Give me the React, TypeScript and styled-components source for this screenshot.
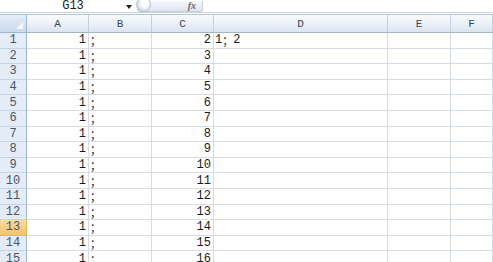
import React from 'react';
import styled, { createGlobalStyle } from 'styled-components';

const columns = ['A', 'B', 'C', 'D', 'E', 'F'];
const rowCount = 15;
const selectedRow = 13;

const GlobalStyle = createGlobalStyle`
  html, body {
    margin: 0;
    padding: 0;
    background: #ffffff;
    overflow: hidden;
  }
`;

const Sheet = styled.div`
  width: 493px;
  height: 262px;
  overflow: hidden;
  font-family: 'Liberation Mono', 'Noto Sans CJK SC', monospace;
  color: #1a1a1a;
`;

const FormulaBar = styled.div`
  display: flex;
  align-items: center;
  height: 12px;
  border-bottom: 1px solid #c9d3df;
`;

const NameBox = styled.div`
  width: 94px;
  padding-left: 26px;
  text-align: center;
  font-size: 12px;
  line-height: 12px;
  color: #222;
  margin-top: -1px;
`;

const DropArrow = styled.span`
  width: 0;
  height: 0;
  margin-left: 6px;
  margin-top: 2px;
  border-left: 3px solid transparent;
  border-right: 3px solid transparent;
  border-top: 4px solid #222;
`;

const FxBox = styled.div`
  position: relative;
  display: flex;
  align-items: center;
  justify-content: flex-end;
  width: 66px;
  height: 11px;
  margin-left: 5px;
  padding-right: 6px;
  border-radius: 0 0 3px 3px;
  background: linear-gradient(#f6f8fb, #dde4ee);
  border: 1px solid #c6d0dc;
  border-top: none;
  box-sizing: border-box;
`;

const Knob = styled.span`
  position: absolute;
  left: -2px;
  top: -4px;
  width: 13px;
  height: 13px;
  border-radius: 50%;
  background: radial-gradient(circle at 60% 40%, #ffffff 30%, #c9d2dd 80%);
  border: 1px solid #b7c2cf;
`;

const FxLabel = styled.span`
  font-family: 'Liberation Serif', serif;
  font-style: italic;
  font-weight: bold;
  font-size: 10px;
  color: #6b6b6b;
  line-height: 10px;
`;

const Grid = styled.div`
  display: grid;
  grid-template-columns: 27px 62px 63px 62px 174px 63px 1fr;
  grid-template-rows: 18px;
  grid-auto-rows: 15.6px;
  margin-top: 1px;
  border-top: 1px solid #b4c4d8;
`;

const Corner = styled.div`
  position: relative;
  background: linear-gradient(#e5edf7, #cbd9ec);
  border-right: 1px solid #9eb6ce;
  border-bottom: 1px solid #9eb6ce;
  box-sizing: border-box;

  &::after {
    content: '';
    position: absolute;
    right: 3px;
    bottom: 3px;
    width: 0;
    height: 0;
    border-left: 7px solid transparent;
    border-bottom: 7px solid #f2f6fb;
  }
`;

const ColHead = styled.div`
  display: flex;
  align-items: center;
  justify-content: center;
  background: linear-gradient(#f9fbfd 0%, #eaf0f7 55%, #dbe4ef 100%);
  border-right: 1px solid #c3cfde;
  border-bottom: 1px solid #9eb6ce;
  box-sizing: border-box;
  font-size: 11px;
  color: #3b4654;
`;

const RowHead = styled.div<{ $active?: boolean }>`
  display: flex;
  align-items: center;
  justify-content: center;
  background: ${(p) =>
    p.$active ? 'linear-gradient(#f9dba3, #f3c46d)' : '#e4ecf7'};
  border-right: 1px solid ${(p) => (p.$active ? '#f2b44d' : '#9eb6ce')};
  border-bottom: 1px solid ${(p) => (p.$active ? '#f2b44d' : '#c5d3e4')};
  box-sizing: border-box;
  font-size: 12px;
  color: #46566b;
`;

const Cell = styled.div<{ $align?: 'left' | 'right' }>`
  display: flex;
  align-items: center;
  justify-content: ${(p) => (p.$align === 'right' ? 'flex-end' : 'flex-start')};
  padding: 0 2px 0 1px;
  border-right: 1px solid #d5dce6;
  border-bottom: 1px solid #d5dce6;
  box-sizing: border-box;
  font-size: 12px;
  white-space: nowrap;
  color: #1a1a1a;
`;

const Semi = styled.span`
  font-family: 'Noto Sans CJK SC', sans-serif;
  font-size: 11px;
`;

const App: React.FC = () => {
  const rows = Array.from({ length: rowCount }, (_, i) => i + 1);

  return (
    <>
      <GlobalStyle />
      <Sheet>
        <FormulaBar>
          <NameBox>G13</NameBox>
          <DropArrow />
          <FxBox>
            <Knob />
            <FxLabel>fx</FxLabel>
          </FxBox>
        </FormulaBar>
        <Grid>
          <Corner />
          {columns.map((c) => (
            <ColHead key={c}>{c}</ColHead>
          ))}
          {rows.map((r) => (
            <React.Fragment key={r}>
              <RowHead $active={r === selectedRow}>{r}</RowHead>
              <Cell $align="right">1</Cell>
              <Cell>
                <Semi>；</Semi>
              </Cell>
              <Cell $align="right">{r + 1}</Cell>
              <Cell>
                {r === 1 && (
                  <>
                    1<Semi>；</Semi>2
                  </>
                )}
              </Cell>
              <Cell />
              <Cell />
            </React.Fragment>
          ))}
        </Grid>
      </Sheet>
    </>
  );
};

export default App;
